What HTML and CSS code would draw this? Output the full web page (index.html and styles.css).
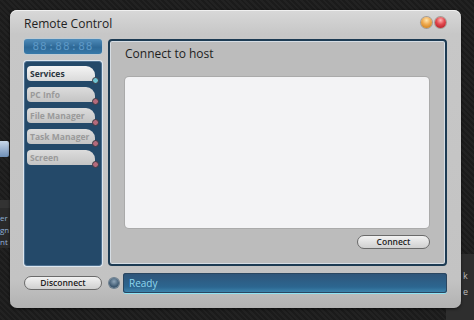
FILE: index.html
```html
<!DOCTYPE html>
<html>
    <head>
        <meta charset="UTF-8">
        <title>Remote Control</title>
        <link rel="stylesheet" href="styles.css">
    </head>
    <body>
        <div class="desktop">
            <!-- bits of other windows behind -->
            <div class="bgIcon"></div>
            <div class="bgText">er<br>gn<br>nt</div>
            <div class="bgPanelRight"></div>
            <div class="bgTextRight">k<br>e</div>

            <div class="window">
                <div class="titlebar">
                    <span class="title">Remote Control</span>
                    <span class="lights">
                        <span class="light orange"></span>
                        <span class="light red"></span>
                    </span>
                </div>

                <div class="content">
                    <div class="sideColumn">
                        <div class="lcd">88:88:88</div>
                        <div class="tabs">
                            <div class="tab active">Services<span class="dot"></span></div>
                            <div class="tab">PC Info<span class="dot"></span></div>
                            <div class="tab">File Manager<span class="dot"></span></div>
                            <div class="tab">Task Manager<span class="dot"></span></div>
                            <div class="tab">Screen<span class="dot"></span></div>
                        </div>
                    </div>

                    <div class="mainPanel">
                        <div class="panelTitle">Connect to host</div>
                        <div class="hostList"></div>
                        <div class="panelActions">
                            <button class="pill" id="connect">Connect</button>
                        </div>
                    </div>
                </div>

                <div class="footer">
                    <button class="pill" id="disconnect">Disconnect</button>
                    <span class="led"></span>
                    <div class="status">Ready</div>
                </div>
            </div>
        </div>
    </body>
</html>
```

FILE: styles.css
```css
html, body {
    margin: 0;
    padding: 0;
}

body {
    width: 474px;
    height: 320px;
    overflow: hidden;
    background: #1d1d1d;
    background-image: repeating-linear-gradient(45deg, #1b1b1b 0px, #1b1b1b 2px, #222222 2px, #222222 4px);
    font-family: "Open Sans", "DejaVu Sans", sans-serif;
}

.desktop {
    position: relative;
    width: 474px;
    height: 320px;
}

.bgIcon {
    position: absolute;
    left: 0;
    top: 141px;
    width: 9px;
    height: 16px;
    background: linear-gradient(to bottom, #c8d8ea, #6f8fb6);
    border-radius: 0 2px 2px 0;
}

.bgText {
    position: absolute;
    left: 0;
    top: 200px;
    width: 10px;
    padding-top: 4px;
    font-size: 8px;
    line-height: 12px;
    color: #8fb0d6;
    background: #2a2a2a;
    border-top: 8px solid #333333;
}

.bgPanelRight {
    position: absolute;
    left: 446px;
    top: 254px;
    width: 28px;
    height: 66px;
    background: #2e2e2e;
}

.bgTextRight {
    position: absolute;
    left: 463px;
    top: 268px;
    font-size: 9px;
    line-height: 16px;
    color: #bbbbbb;
}

.window {
    position: absolute;
    left: 10px;
    top: 10px;
    width: 451px;
    height: 298px;
    box-sizing: border-box;
    padding: 0 14px;
    border-radius: 7px;
    background: linear-gradient(to bottom, #d8d8d8 0px, #c7c7c7 24px, #c3c3c3 270px, #b2b2b2 298px);
    box-shadow: inset 0 1px 0 #f0f0f0, 0 1px 3px rgba(0, 0, 0, 0.6);
    display: flex;
    flex-direction: column;
}

.titlebar {
    height: 29px;
    display: flex;
    align-items: center;
    justify-content: space-between;
}

.title {
    font-size: 12px;
    color: #222222;
    margin-top: -2px;
}

.lights {
    display: flex;
    gap: 3px;
    margin-right: 1px;
    margin-top: -4px;
}

.light {
    width: 11px;
    height: 11px;
    border-radius: 50%;
    box-shadow: 0 0 0 1px rgba(110, 90, 70, 0.45);
}

.light.orange {
    background: radial-gradient(circle at 50% 30%, #ffe6b0 0px, #f0ac52 4px, #d88d2c 7px);
}

.light.red {
    background: radial-gradient(circle at 50% 30%, #ffb8b8 0px, #e34a4f 4px, #c22a33 7px);
}

.content {
    display: flex;
    gap: 6px;
    height: 227px;
}

.sideColumn {
    width: 78px;
    display: flex;
    flex-direction: column;
    gap: 7px;
}

.lcd {
    height: 15px;
    border-radius: 3px;
    background: linear-gradient(to bottom, #4f8cba, #2e6896 55%, #3779a9);
    box-shadow: 0 0 2px #a8d6f2;
    color: #5d98c6;
    font-family: "DejaVu Sans Mono", monospace;
    font-size: 11px;
    line-height: 15px;
    text-align: center;
    letter-spacing: 1px;
}

.tabs {
    flex: 1;
    box-sizing: border-box;
    background: #244969;
    border: 1px solid #4c6f8f;
    border-radius: 3px;
    box-shadow: 0 0 0 1px #dde6ee;
    padding: 4px 0 0 2px;
    display: flex;
    flex-direction: column;
    gap: 6px;
}

.tab {
    position: relative;
    width: 68px;
    height: 15px;
    box-sizing: border-box;
    padding-left: 3px;
    border-radius: 4px 9px 3px 4px;
    background: linear-gradient(to bottom, #dcdcdc, #c4c4c4);
    font-size: 8.5px;
    font-weight: bold;
    line-height: 15px;
    color: #9a9a9a;
}

.tab.active {
    background: linear-gradient(to bottom, #f4f4f4, #dadada);
    color: #2a3640;
}

.dot {
    position: absolute;
    right: -4px;
    bottom: -3px;
    width: 5px;
    height: 5px;
    border-radius: 50%;
    background: #b46a7c;
    border: 1.5px solid #3b3b45;
}

.tab.active .dot {
    background: #6fc3d2;
}

.mainPanel {
    width: 339px;
    box-sizing: border-box;
    border: 2px solid #1d3b53;
    border-radius: 4px;
    background: #bcbcbc;
    box-shadow: inset 0 0 0 1px #d6dde4;
    padding: 0 16px 0 15px;
    display: flex;
    flex-direction: column;
}

.panelTitle {
    font-size: 12px;
    color: #1e1e1e;
    height: 36px;
    line-height: 26px;
}

.hostList {
    height: 151px;
    background: #f3f3f5;
    border-radius: 4px;
    box-shadow: 0 0 0 1px #aaaaaa;
}

.panelActions {
    display: flex;
    justify-content: flex-end;
    padding-top: 7px;
}

.pill {
    height: 14px;
    padding: 0;
    border: 1px solid #6a6a6a;
    border-radius: 8px;
    background: linear-gradient(to bottom, #f2f2f2, #d0d0d0);
    font-family: "Open Sans", "DejaVu Sans", sans-serif;
    font-size: 8.5px;
    font-weight: 600;
    line-height: 12px;
    color: #222222;
}

#connect {
    width: 73px;
    margin-right: -1px;
}

.footer {
    display: flex;
    align-items: center;
    height: 20px;
    margin-top: 7px;
}

#disconnect {
    width: 78px;
}

.led {
    width: 10px;
    height: 10px;
    margin: 0 4px 0 7px;
    border-radius: 50%;
    background: radial-gradient(circle at 50% 35%, #8da4b8 0px, #3f5a72 5px);
    box-shadow: 0 0 0 1px #6c7f8f;
}

.status {
    flex: 1;
    height: 20px;
    box-sizing: border-box;
    border-radius: 3px;
    background: linear-gradient(to bottom, #2f5478, #2c6690 70%, #3f89b2);
    box-shadow: 0 1px 0 #8fe4f4, inset 0 0 0 1px #2a4660;
    padding-left: 6px;
    font-size: 10px;
    line-height: 20px;
    color: #8fd8ee;
}
```
